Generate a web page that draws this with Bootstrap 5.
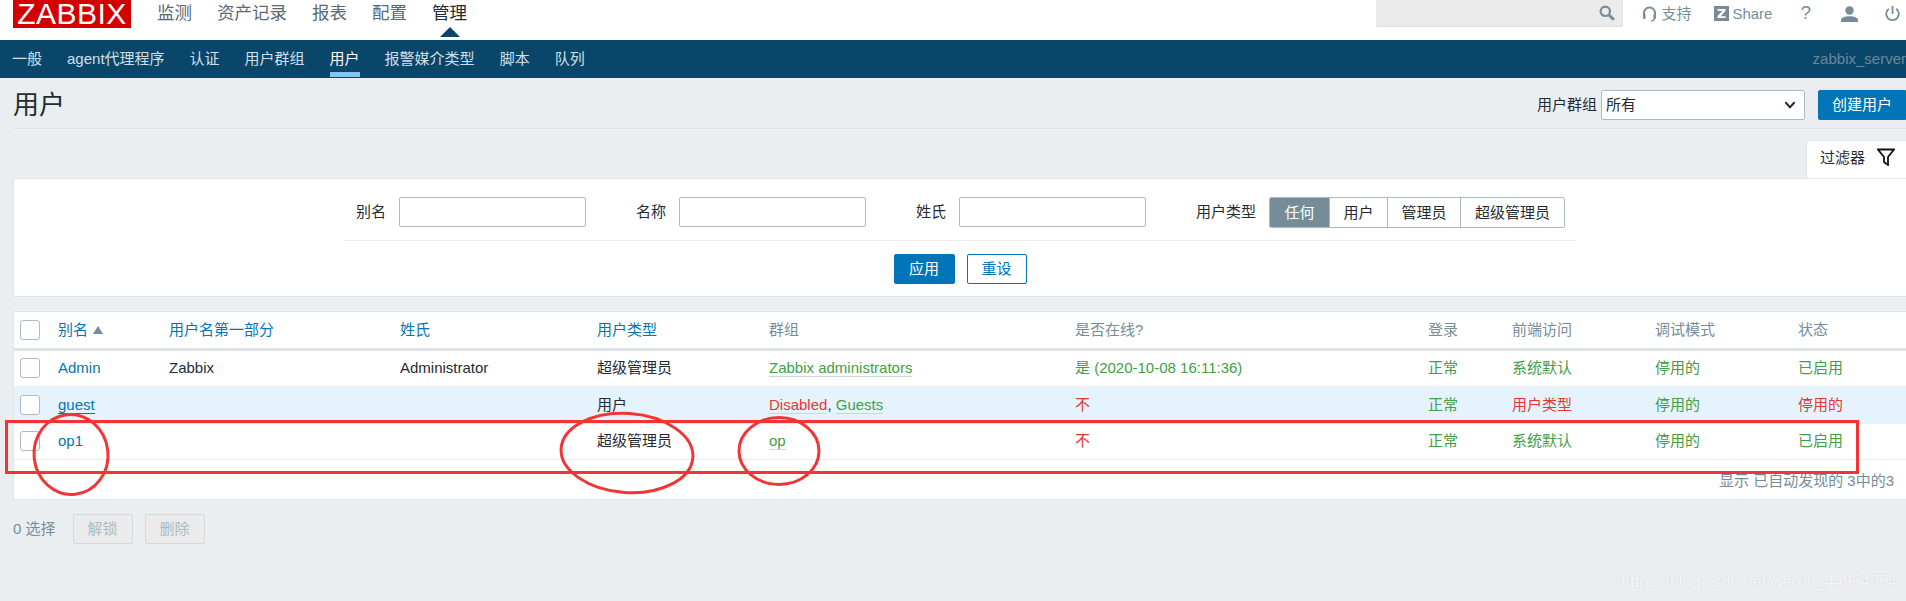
<!DOCTYPE html>
<html lang="zh-CN">
<head>
<meta charset="utf-8">
<title>用户</title>
<link href="https://cdn.jsdelivr.net/npm/bootstrap@5.3.0/dist/css/bootstrap.min.css" rel="stylesheet">
<style>
html,body{height:601px;overflow:hidden}
body{position:relative;background:#ebeef0;color:#1f2c33;font:15px/1.2 "Liberation Sans","Noto Sans CJK SC",sans-serif}
a{text-decoration:none;color:#0275b8}
.zb-top{height:40px;background:#fff}
.zb-logo{width:118px;height:28px;margin:0 26px 0 13px;background:#d40000;color:#fff;font-size:30px;line-height:27px;text-align:center;letter-spacing:.5px}
.zb-mainnav{gap:25px;font-size:17.5px;padding-top:3px;line-height:20px;height:28px}
.zb-mainnav a{color:#5b6a72}
.zb-mainnav .zb-on{color:#1f2c33;position:relative}
.zb-mainnav .zb-on::after{content:"";position:absolute;left:8px;top:24px;border:10px solid transparent;border-top:0;border-bottom-color:#0a466a}
.zb-search{width:247px;height:27px;background:#ebebeb;border-bottom:1px solid #dcdcdc;border-right:1px solid #e2e2e2;border-radius:0 0 2px 2px;padding:5px 7px 0 0;margin-right:19px}
.zb-tools{color:#768d99;height:27px;font-size:15px}
.zb-tool{color:#768d99;display:flex;align-items:center;height:27px}
.zb-t-share{margin-left:23px}.zb-t-share span{margin-left:3px}
.zb-t-help{margin-left:28px;font-size:19px}
.zb-t-user{margin-left:30px}
.zb-t-off{margin-left:27px;margin-right:6px}
.zb-sub{height:38px;background:#0a466a;padding-left:12px;gap:25px;overflow:hidden}
.zb-sub a{color:#d0e0ea;height:38px;line-height:38px;position:relative}
.zb-sub .zb-on{color:#fff;border-bottom:0}
.zb-sub .zb-on::after{content:"";position:absolute;left:0;right:0;top:32px;height:5px;background:#7fc6f2}
.zb-host{color:#668a9d;line-height:38px;white-space:nowrap}
.zb-head{height:51px;margin-left:13px;border-bottom:1px solid #dfe4e7;padding-top:12px}
.zb-title{font-size:26px;font-weight:400;line-height:30px;margin:0}
.zb-sel{width:204px;height:30px;padding:0 30px 0 4px;font-size:15px;color:#1f2c33;border-color:#acbbc2;border-radius:2px;margin:0 13px 0 4px;background-position:right 6px center;background-image:url("data:image/svg+xml,%3csvg xmlns='http://www.w3.org/2000/svg' viewBox='0 0 16 16'%3e%3cpath fill='none' stroke='%231f2c33' stroke-linecap='round' stroke-width='2.6' d='M2.500 5l5.500 6 5.500-6'/%3e%3c/svg%3e")}
.zb-create{width:88px;height:30px;padding:0;font-size:15px;background:#0275b8;border-color:#0275b8;color:#fff;border-radius:2px 0 0 2px}
.zb-tabrow{height:38px;margin-top:11px}
.zb-tab{width:100px;height:38px;background:#fff;border:1px solid #dfe4e7;border-width:1px 0 0 1px;padding:8px 0 0 13px;border-radius:2px 0 0 0;gap:12px}
.zb-tab svg{margin-top:-1px}
.zb-filter{height:119px;margin-left:13px;background:#fff;border:1px solid #dfe4e7;border-right:0;padding-top:18px}
.zb-fields{margin-left:330px;width:1232px;height:44px;padding-left:12px;border-bottom:1px solid #ebeef0;align-items:flex-start}
.zb-lab{line-height:30px;margin-right:13px}
.zb-inp{width:187px;height:30px;border-color:#acbbc2;border-radius:2px;margin-right:50px;padding:0 5px}
.zb-seg{height:31px;border:1px solid #acbbc2;border-radius:2px;overflow:hidden}
.zb-seg span{display:block;line-height:29px;text-align:center;border-left:1px solid #acbbc2}
.zb-seg span:first-child{border-left:0;background:#768d99;color:#fff;width:59px}
.zb-s2{width:58px}.zb-s3{width:73px}.zb-s4{width:104px}
.zb-acts{gap:12px;margin-top:13px}
.zb-b{height:30px;width:60px;padding:0;font-size:15px;border-radius:2px}
.zb-apply{background:#0275b8;border-color:#0275b8;color:#fff;width:61px}
.zb-reset{background:#fff;border-color:#0275b8;color:#0275b8}
.zb-list{height:189px;margin:14px 0 0 13px;background:#fff;border:1px solid #dfe4e7;border-right:0}
.zb-tbl{table-layout:fixed;width:1893px;margin:0;font-size:15px;--bs-table-bg:transparent}
.zb-tbl th,.zb-tbl td{padding:0;vertical-align:middle;font-weight:400;color:#1f2c33;border-bottom:1px solid #ebeef0;white-space:nowrap}
.zb-tbl thead th{height:37px;border-bottom:3px solid #dfe4e7;color:#768d99}
.zb-tbl thead th a{color:#0275b8}
.zb-tbl tbody td{height:37px}
.zb-tbl tbody tr:last-child td{height:36px}
.zb-tbl .zb-hl td{background:#e5f3fd}
.zb-tbl .zb-g{color:#429e47}
.zb-tbl .zb-r{color:#e33734}
.zb-tbl td a.zb-l{border-bottom:1px solid #cdd6da}
.zb-tbl td a.zb-g{color:#429e47}
.zb-tbl td a.zb-r{color:#e33734}
.zb-ul{border-bottom:1px solid #0275b8}
.zb-check{width:20px;height:20px;display:block;margin:0 0 0 6px;border:1px solid #acbbc2;border-radius:3px;background:#fff}
.zb-c1{width:44px}.zb-c2{width:111px}.zb-c3{width:231px}.zb-c4{width:197px}.zb-c5{width:172px}.zb-c6{width:306px}.zb-c7{width:353px}.zb-c8{width:84px}.zb-c9{width:143px}.zb-c10{width:143px}
.zb-arrow{display:inline-block;margin-left:5px;border:5px solid transparent;border-top:0;border-bottom:8px solid #768d99;vertical-align:1px}
.zb-paging{color:#768d99;text-align:right;padding:11px 12px 0 0;line-height:20px}
.zb-bottom{margin:14px 0 0 13px;gap:17px;color:#768d99}
.zb-disgroup{gap:12px}
.zb-dis{background:#ebebeb;border:1px solid #d3dade;color:#acbbc2;display:block;height:30px;width:60px;line-height:28px;text-align:center;border-radius:2px}
.zb-mark{position:absolute;left:0;top:0;pointer-events:none}
.zb-water{position:absolute;right:9px;top:573px;font-size:16px;line-height:18px;color:#f5f6f7;text-shadow:0 0 2px #cfd4d8;white-space:nowrap;letter-spacing:.1px}
</style>
</head>
<body>
<header class="zb-top d-flex">
  <div class="zb-logo">ZABBIX</div>
  <nav class="zb-mainnav d-flex">
    <a href="#">监测</a><a href="#">资产记录</a><a href="#">报表</a><a href="#">配置</a><a href="#" class="zb-on">管理</a>
  </nav>
  <div class="zb-tools d-flex ms-auto">
    <div class="zb-search d-flex justify-content-end">
      <svg width="16" height="16" viewBox="0 0 16 16" fill="none" stroke="#768d99"><circle cx="6.3" cy="6.3" r="4.7" stroke-width="2.2"/><path d="M10 10l4.8 4.8" stroke-width="3"/></svg>
    </div>
    <a href="#" class="zb-tool">
      <svg class="me-1" width="15" height="16" viewBox="0 0 15 16" fill="none" stroke="#768d99" stroke-width="2"><path d="M2 10V7a5.5 5.5 0 0 1 11 0v3"/><rect x="1" y="8" width="2.6" height="5" rx="1" fill="#768d99" stroke="none"/><rect x="11.4" y="8" width="2.6" height="5" rx="1" fill="#768d99" stroke="none"/><path d="M12.5 12.5c0 1.6-1.5 2.3-3.5 2.3" stroke-width="1.3"/></svg>
      支持
    </a>
    <a href="#" class="zb-tool zb-t-share">
      <svg width="15" height="15" viewBox="0 0 15 15"><rect width="15" height="15" fill="#768d99"/><path d="M3.5 3h8v2L6.6 10.2h5V12h-8v-2l4.9-5.2H3.5z" fill="#fff"/></svg>
      <span>Share</span>
    </a>
    <a href="#" class="zb-tool zb-t-help">?</a>
    <a href="#" class="zb-tool zb-t-user">
      <svg width="17" height="16" viewBox="0 0 17 16" fill="#768d99"><circle cx="8.5" cy="4.5" r="4.2"/><path d="M0 16v-2c0-2.6 4-3.8 8.5-3.8S17 11.400 17 14v2z"/></svg>
    </a>
    <a href="#" class="zb-tool zb-t-off">
      <svg width="15" height="17" viewBox="0 0 15 17" fill="none" stroke="#768d99" stroke-width="1.8"><path d="M7.500 1v8"/><path d="M3.800 3.800a6.300 6.300 0 1 0 7.400 0"/></svg>
    </a>
  </div>
</header>
<nav class="zb-sub d-flex">
  <a href="#">一般</a><a href="#">agent代理程序</a><a href="#">认证</a><a href="#">用户群组</a><a href="#" class="zb-on">用户</a><a href="#">报警媒介类型</a><a href="#">脚本</a><a href="#">队列</a>
  <span class="zb-host ms-auto">zabbix_server</span>
</nav>
<div class="zb-head d-flex justify-content-between">
  <h1 class="zb-title">用户</h1>
  <div class="d-flex align-items-center align-self-start">
    <label>用户群组</label>
    <select class="form-select zb-sel"><option>所有</option></select>
    <button class="btn zb-create">创建用户</button>
  </div>
</div>
<div class="zb-tabrow d-flex justify-content-end">
  <div class="zb-tab d-flex">
    <span>过滤器</span>
    <svg width="18" height="18" viewBox="0 0 18 18" fill="none" stroke="#111" stroke-width="1.800"><path d="M1 1.500h16l-6 7.500v8l-4-3V9z"/></svg>
  </div>
</div>
<section class="zb-filter">
  <div class="zb-fields d-flex">
    <label class="zb-lab">别名</label><input class="form-control zb-inp" type="text">
    <label class="zb-lab">名称</label><input class="form-control zb-inp" type="text">
    <label class="zb-lab">姓氏</label><input class="form-control zb-inp" type="text">
    <label class="zb-lab">用户类型</label>
    <div class="zb-seg d-flex"><span>任何</span><span class="zb-s2">用户</span><span class="zb-s3">管理员</span><span class="zb-s4">超级管理员</span></div>
  </div>
  <div class="zb-acts d-flex justify-content-center">
    <button class="btn zb-b zb-apply">应用</button>
    <button class="btn zb-b zb-reset">重设</button>
  </div>
</section>
<section class="zb-list">
  <table class="table zb-tbl">
    <colgroup><col class="zb-c1"><col class="zb-c2"><col class="zb-c3"><col class="zb-c4"><col class="zb-c5"><col class="zb-c6"><col class="zb-c7"><col class="zb-c8"><col class="zb-c9"><col class="zb-c10"><col></colgroup>
    <thead><tr>
      <th><span class="zb-check"></span></th>
      <th><a href="#">别名</a><span class="zb-arrow"></span></th>
      <th><a href="#">用户名第一部分</a></th>
      <th><a href="#">姓氏</a></th>
      <th><a href="#">用户类型</a></th>
      <th>群组</th><th>是否在线?</th><th>登录</th><th>前端访问</th><th>调试模式</th><th>状态</th>
    </tr></thead>
    <tbody>
      <tr>
        <td><span class="zb-check"></span></td><td><a href="#">Admin</a></td><td>Zabbix</td><td>Administrator</td><td>超级管理员</td>
        <td><a href="#" class="zb-l zb-g">Zabbix administrators</a></td><td class="zb-g">是 (2020-10-08 16:11:36)</td>
        <td class="zb-g">正常</td><td class="zb-g">系统默认</td><td class="zb-g">停用的</td><td class="zb-g">已启用</td>
      </tr>
      <tr class="zb-hl">
        <td><span class="zb-check"></span></td><td><a href="#" class="zb-ul">guest</a></td><td></td><td></td><td>用户</td>
        <td><a href="#" class="zb-l zb-r">Disabled</a>, <a href="#" class="zb-l zb-g">Guests</a></td><td class="zb-r">不</td>
        <td class="zb-g">正常</td><td class="zb-r">用户类型</td><td class="zb-g">停用的</td><td class="zb-r">停用的</td>
      </tr>
      <tr>
        <td><span class="zb-check"></span></td><td><a href="#">op1</a></td><td></td><td></td><td>超级管理员</td>
        <td><a href="#" class="zb-l zb-g">op</a></td><td class="zb-r">不</td>
        <td class="zb-g">正常</td><td class="zb-g">系统默认</td><td class="zb-g">停用的</td><td class="zb-g">已启用</td>
      </tr>
    </tbody>
  </table>
  <div class="zb-paging">显示 已自动发现的 3中的3</div>
</section>
<div class="zb-bottom d-flex align-items-center">
  <span>0 选择</span>
  <div class="d-flex zb-disgroup">
    <span class="zb-dis">解锁</span><span class="zb-dis">删除</span>
  </div>
</div>
<div class="zb-water">https://blog.csdn.net/weixin_44954554</div>
<svg class="zb-mark" width="1906" height="601" viewBox="0 0 1906 601" fill="none" stroke="#f43434" stroke-width="3">
  <rect x="6.500" y="421.500" width="1851" height="51"/>
  <ellipse cx="71" cy="454.500" rx="37" ry="40" transform="rotate(-6 71 454.500)"/>
  <ellipse cx="627" cy="453" rx="66" ry="39.500" transform="rotate(4 627 453)"/>
  <ellipse cx="779" cy="451" rx="40" ry="33.500"/>
</svg>
</body>
</html>
